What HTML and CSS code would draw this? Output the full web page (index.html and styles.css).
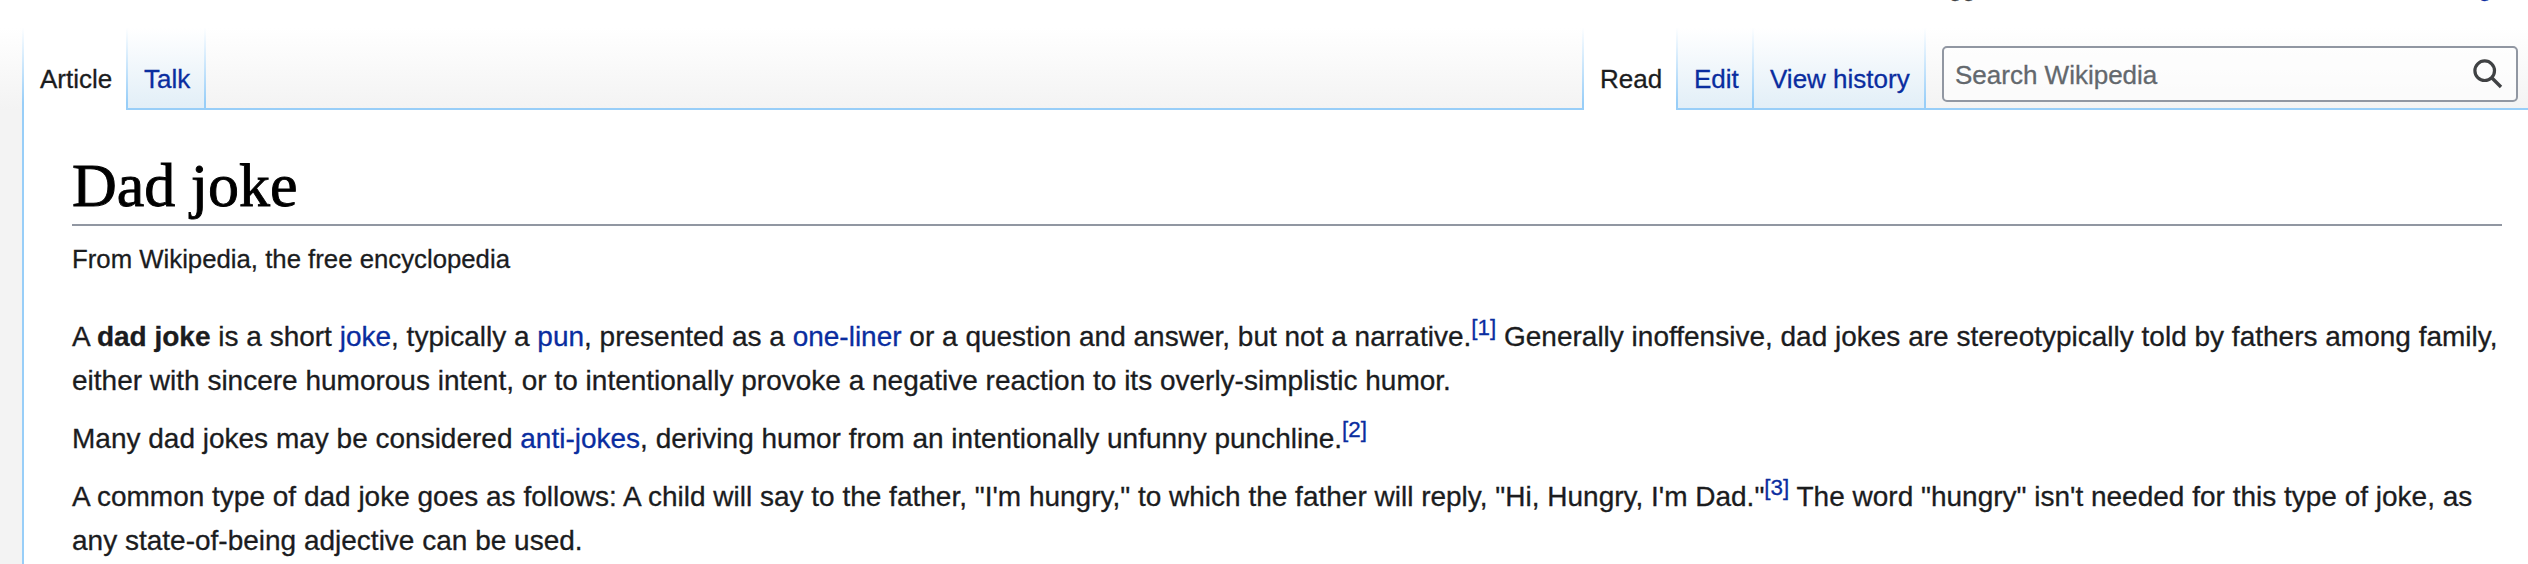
FILE: index.html
```html
<!DOCTYPE html>
<html lang="en">
<head>
	<meta charset="utf-8">
	<title>Dad joke - Wikipedia</title>
	<link rel="stylesheet" href="styles.css">
</head>
<body>
<div id="head">
	<div class="personal">
		<span class="anon">Not logged in</span>
		<a class="login" href="#">Log in</a>
	</div>
	<div class="nav">
		<div class="tabs">
			<a class="tab selected" href="#">Article</a>
			<a class="tab" href="#">Talk</a>
		</div>
		<div class="tabs views">
			<a class="tab selected" href="#">Read</a>
			<a class="tab" href="#">Edit</a>
			<a class="tab" href="#">View history</a>
		</div>
		<form class="search">
			<input class="search-input" type="text" placeholder="Search Wikipedia">
			<svg class="search-icon" width="32" height="32" viewBox="0 0 32 32">
				<circle cx="12.7" cy="12.7" r="9.8" fill="none" stroke="#404244" stroke-width="3.2"/>
				<path d="M19.5 19.5L29 29" stroke="#404244" stroke-width="3.4"/>
			</svg>
		</form>
	</div>
</div>
<div id="content">
	<h1 class="heading">Dad joke</h1>
	<div class="sitesub">From Wikipedia, the free encyclopedia</div>
	<div class="text">
		<p>A <b>dad joke</b> is a short <a href="#">joke</a>, typically a <a href="#">pun</a>, presented as a <a href="#">one-liner</a> or a question and answer, but not a narrative.<sup><a href="#">[1]</a></sup> Generally inoffensive, dad jokes are stereotypically told by fathers among family, either with sincere humorous intent, or to intentionally provoke a negative reaction to its overly-simplistic humor.</p>
		<p>Many dad jokes may be considered <a href="#">anti-jokes</a>, deriving humor from an intentionally unfunny punchline.<sup><a href="#">[2]</a></sup></p>
		<p>A common type of dad joke goes as follows: A child will say to the father, "I'm hungry," to which the father will reply, "Hi, Hungry, I'm Dad."<sup><a href="#">[3]</a></sup> The word "hungry" isn't needed for this type of joke, as any state-of-being adjective can be used.</p>
	</div>
</div>
</body>
</html>
```
FILE: styles.css
```css
*{
	box-sizing: border-box;
}
body{
	margin: 0;
	height: 564px;
	overflow: hidden;
	background-color: #f3f3f3;
	color: #1b1c1e;
	font-family: "Liberation Sans", Arial, sans-serif;
	-webkit-text-stroke: .3px;
}
a{
	color: #0a2d9f;
	text-decoration: none;
}
#head{
	height: 110px;
	background: linear-gradient(#fff 28px, #f3f3f3 110px);
}
.personal{
	height: 28px;
	display: flex;
	justify-content: flex-end;
	padding-right: 11px;
	font-size: 24px;
	line-height: 28px;
}
.personal span,
.personal a{
	margin-top: -26px;
}
.anon{
	color: #404244;
	margin-right: 424px;
}
.nav{
	display: flex;
	height: 82px;
	padding-left: 22px;
}
/* vertical tab lines fade in from the top */
.tabs{
	display: flex;
	height: 82px;
	border-left: 2px solid;
	border-image: linear-gradient(#fff, #98cef8 90%) 1;
}
.tab{
	height: 82px;
	padding: 38px 14px 0 16px;
	font-size: 26px;
	line-height: 26px;
	white-space: nowrap;
	background: linear-gradient(#98cef8, #98cef8) 0 80px / 100% 2px no-repeat, linear-gradient(#fff, #e1eef7);
	border-right: 2px solid;
	border-image: linear-gradient(#fff, #98cef8 90%) 1;
}
.tab.selected{
	color: #1b1c1e;
	background: #fff;
}
.tabs:first-child{
	width: 184px;
}
.tabs:first-child .tab:first-child{
	width: 104px;
}
.tabs:first-child .tab:last-child{
	width: 78px;
}
.views .tab:nth-child(1){
	width: 94px;
}
.views .tab:nth-child(2){
	width: 76px;
}
.views .tab:nth-child(3){
	width: 172px;
}
.nav::before{
	content: "";
	order: 1;
	flex: 1;
	border-bottom: 2px solid #98cef8;
}
.views{
	order: 2;
}
.search{
	order: 3;
	display: flex;
	width: 602px;
	padding: 18px 10px 6px 16px;
	border-bottom: 2px solid #98cef8;
}
.search-input{
	width: 576px;
	height: 56px;
	padding: 2px 60px 0 11px;
	border: 2px solid #9197a2;
	border-radius: 5px;
	background: rgba(255,255,255,.6);
	font-family: inherit;
	font-size: 26px;
}
.search-input::placeholder{
	color: #63686d;
}
.search-icon{
	flex: none;
	margin: 12px 0 0 -46px;
}
#content{
	height: 454px;
	margin-left: 22px;
	padding: 46px 26px 0 48px;
	border-left: 2px solid #98cef8;
	background: #fff;
}
.heading{
	height: 70px;
	margin: 0;
	border-bottom: 2px solid #9197a2;
	color: #000;
	font: 62px/58px "Liberation Serif", serif;
	-webkit-text-stroke: .9px #000;
}
.sitesub{
	margin-top: 18px;
	font-size: 25.76px;
	line-height: 30px;
}
.text{
	margin-top: 41px;
	font-size: 28px;
	line-height: 44px;
}
.text p{
	margin: 0 0 14px;
}
sup{
	font-size: 22.4px;
	line-height: 1;
	vertical-align: 11px;
}
```
